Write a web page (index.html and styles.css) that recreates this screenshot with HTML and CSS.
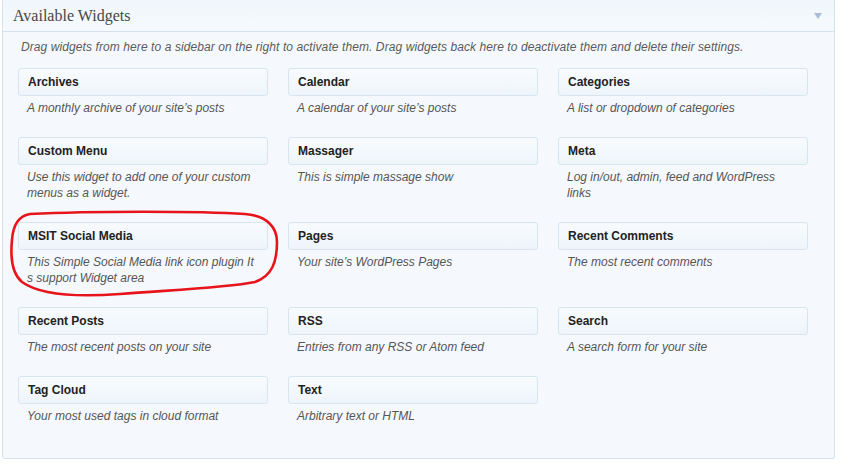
FILE: index.html
```html
<!DOCTYPE html>
<html>
<head>
<meta charset="utf-8">
<link rel="stylesheet" href="styles.css">
</head>
<body>
<div class="panel">
  <div class="panel-head">
    <h3 class="panel-title">Available Widgets</h3>
    <span class="toggle"></span>
  </div>
  <div class="panel-body">
    <p class="intro">Drag widgets from here to a sidebar on the right to activate them. Drag widgets back here to deactivate them and delete their settings.</p>
    <div class="widget-grid">
      <div class="widget"><div class="widget-title">Archives</div><div class="widget-desc">A monthly archive of your site’s posts</div></div>
      <div class="widget"><div class="widget-title">Calendar</div><div class="widget-desc">A calendar of your site’s posts</div></div>
      <div class="widget"><div class="widget-title">Categories</div><div class="widget-desc">A list or dropdown of categories</div></div>

      <div class="widget"><div class="widget-title">Custom Menu</div><div class="widget-desc">Use this widget to add one of your custom menus as a widget.</div></div>
      <div class="widget"><div class="widget-title">Massager</div><div class="widget-desc">This is simple massage show</div></div>
      <div class="widget"><div class="widget-title">Meta</div><div class="widget-desc">Log in/out, admin, feed and WordPress links</div></div>

      <div class="widget highlighted">
        <div class="widget-title">MSIT Social Media</div><div class="widget-desc">This Simple Social Media link icon plugin It s support Widget area</div>
        <svg class="circle-mark" width="280" height="95" viewBox="0 0 280 95">
          <path d="M22,4 C82,1 192,1 237,4 C260,6 269,18 269,32 C269,52 264,66 247,72 C217,78 162,80 112,84 C72,87 32,85 14,72 C2,62 3,40 4,30 C5,15 10,6 22,4 Z" fill="none" stroke="#e8141b" stroke-width="2.6" stroke-linejoin="round"/>
        </svg>
      </div>
      <div class="widget"><div class="widget-title">Pages</div><div class="widget-desc">Your site’s WordPress Pages</div></div>
      <div class="widget"><div class="widget-title">Recent Comments</div><div class="widget-desc">The most recent comments</div></div>

      <div class="widget"><div class="widget-title">Recent Posts</div><div class="widget-desc">The most recent posts on your site</div></div>
      <div class="widget"><div class="widget-title">RSS</div><div class="widget-desc">Entries from any RSS or Atom feed</div></div>
      <div class="widget"><div class="widget-title">Search</div><div class="widget-desc">A search form for your site</div></div>

      <div class="widget"><div class="widget-title">Tag Cloud</div><div class="widget-desc">Your most used tags in cloud format</div></div>
      <div class="widget"><div class="widget-title">Text</div><div class="widget-desc">Arbitrary text or HTML</div></div>
    </div>
  </div>
</div>
</body>
</html>
```
FILE: styles.css
```css
html, body {
  margin: 0;
  padding: 0;
  background: #ffffff;
}
body {
  font-family: "Liberation Sans", Arial, sans-serif;
  font-size: 12px;
}
.panel {
  margin-left: 2px;
  width: 831px;
  height: 458px;
  border: 1px solid #d6e3ee;
  border-top: none;
  border-radius: 0 0 3px 3px;
  background: #f5f9fd;
  box-sizing: content-box;
}
.panel-head {
  height: 31px;
  border-bottom: 1px solid #d3e2ee;
  background: linear-gradient(to bottom, #f0f6fb, #f6fafd);
  display: flex;
  align-items: center;
  justify-content: space-between;
  padding: 0 10px 0 10px;
}
.panel-title {
  margin: 0;
  font-family: "Liberation Serif", "Times New Roman", serif;
  font-weight: normal;
  font-size: 16px;
  color: #464646;
}
.toggle {
  width: 0;
  height: 0;
  border-left: 4px solid transparent;
  border-right: 4px solid transparent;
  border-top: 6px solid #a9bdd1;
  margin-top: 1px;
  margin-right: 2px;
}
.panel-body {
  padding: 7px 15px 0 15px;
}
.intro {
  margin: 0 0 13px 3px;
  font-style: italic;
  line-height: 16px;
  letter-spacing: 0.09px;
  color: #5b5b5b;
}
.widget-grid {
  display: grid;
  grid-template-columns: repeat(3, 250px);
  column-gap: 20px;
  row-gap: 21px;
}
.widget {
  position: relative;
}
.widget-title {
  height: 26px;
  line-height: 26px;
  border: 1px solid #d8e5ef;
  border-radius: 3px;
  background: linear-gradient(to bottom, #f8fbfe, #eef5fa);
  padding-left: 9px;
  font-weight: bold;
  color: #222;
}
.widget-desc {
  margin-top: 4px;
  padding-left: 9px;
  padding-right: 8px;
  line-height: 16px;
  font-style: italic;
  color: #555;
}
.circle-mark {
  position: absolute;
  left: -10px;
  top: -12px;
  pointer-events: none;
}
```
